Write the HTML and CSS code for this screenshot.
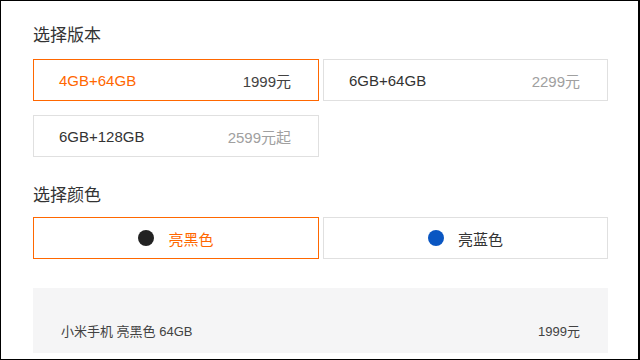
FILE: index.html
```html
<!DOCTYPE html>
<html lang="zh-CN">
<head>
<meta charset="utf-8">
<title>选择版本</title>
<link rel="stylesheet" href="styles.css">
</head>
<body>
<div class="frame">
  <main class="panel">
    <h2 class="title title-first">选择版本</h2>
    <div class="grid">
      <div class="opt active"><span class="name">4GB+64GB</span><span class="price dark">1999元</span></div>
      <div class="opt"><span class="name">6GB+64GB</span><span class="price">2299元</span></div>
      <div class="opt"><span class="name">6GB+128GB</span><span class="price">2599元起</span></div>
    </div>
    <h2 class="title title-second">选择颜色</h2>
    <div class="grid">
      <div class="opt color active"><span class="dot dot-black"></span><span class="cname">亮黑色</span></div>
      <div class="opt color"><span class="dot dot-blue"></span><span class="cname">亮蓝色</span></div>
    </div>
    <div class="summary">
      <span class="sum-name">小米手机 亮黑色 64GB</span>
      <span class="sum-price">1999元</span>
    </div>
  </main>
</div>
</body>
</html>
```

FILE: styles.css
```css
html, body {
  margin: 0;
  padding: 0;
  background: #fff;
}
body {
  font-family: "Liberation Sans", "Noto Sans CJK SC", sans-serif;
  color: #333;
}
.frame {
  box-sizing: border-box;
  width: 640px;
  height: 360px;
  border-top: 1px solid #000;
  border-left: 1px solid #000;
  border-right: 2px solid #000;
  border-bottom: 1px solid #000;
  overflow: hidden;
}
.panel {
  padding: 0 0 0 32px;
  width: 575px;
}
.title {
  margin: 0;
  font-size: 17px;
  font-weight: normal;
  line-height: 24px;
  color: #333;
}
.title-first {
  margin-top: 23px;
  margin-bottom: 11px;
}
.title-second {
  margin-top: 27px;
  margin-bottom: 9px;
}
.grid {
  display: grid;
  grid-template-columns: 286px 285px;
  column-gap: 4px;
  row-gap: 14px;
}
.opt {
  box-sizing: border-box;
  height: 42px;
  border: 1px solid #e0e0e0;
  display: flex;
  align-items: center;
  justify-content: space-between;
  padding: 0 27px 0 25px;
  font-size: 15px;
  color: #333;
}
.opt.active {
  border-color: #ff6700;
}
.opt.active .name,
.opt.active .cname {
  color: #ff6700;
}
.price {
  color: #a0a0a0;
}
.price.dark {
  color: #424242;
}
.opt.color {
  justify-content: center;
  padding: 0;
  gap: 14px;
}
.dot {
  width: 16px;
  height: 16px;
  border-radius: 50%;
  display: block;
}
.dot-black { background: #222; }
.dot-blue { background: #0a56c2; }
.summary {
  box-sizing: border-box;
  margin-top: 29px;
  height: 65px;
  background: #f5f5f6;
  display: flex;
  justify-content: space-between;
  align-items: flex-start;
  padding: 34px 28px 0 28px;
  font-size: 13px;
  line-height: 20px;
  color: #424242;
}
```
